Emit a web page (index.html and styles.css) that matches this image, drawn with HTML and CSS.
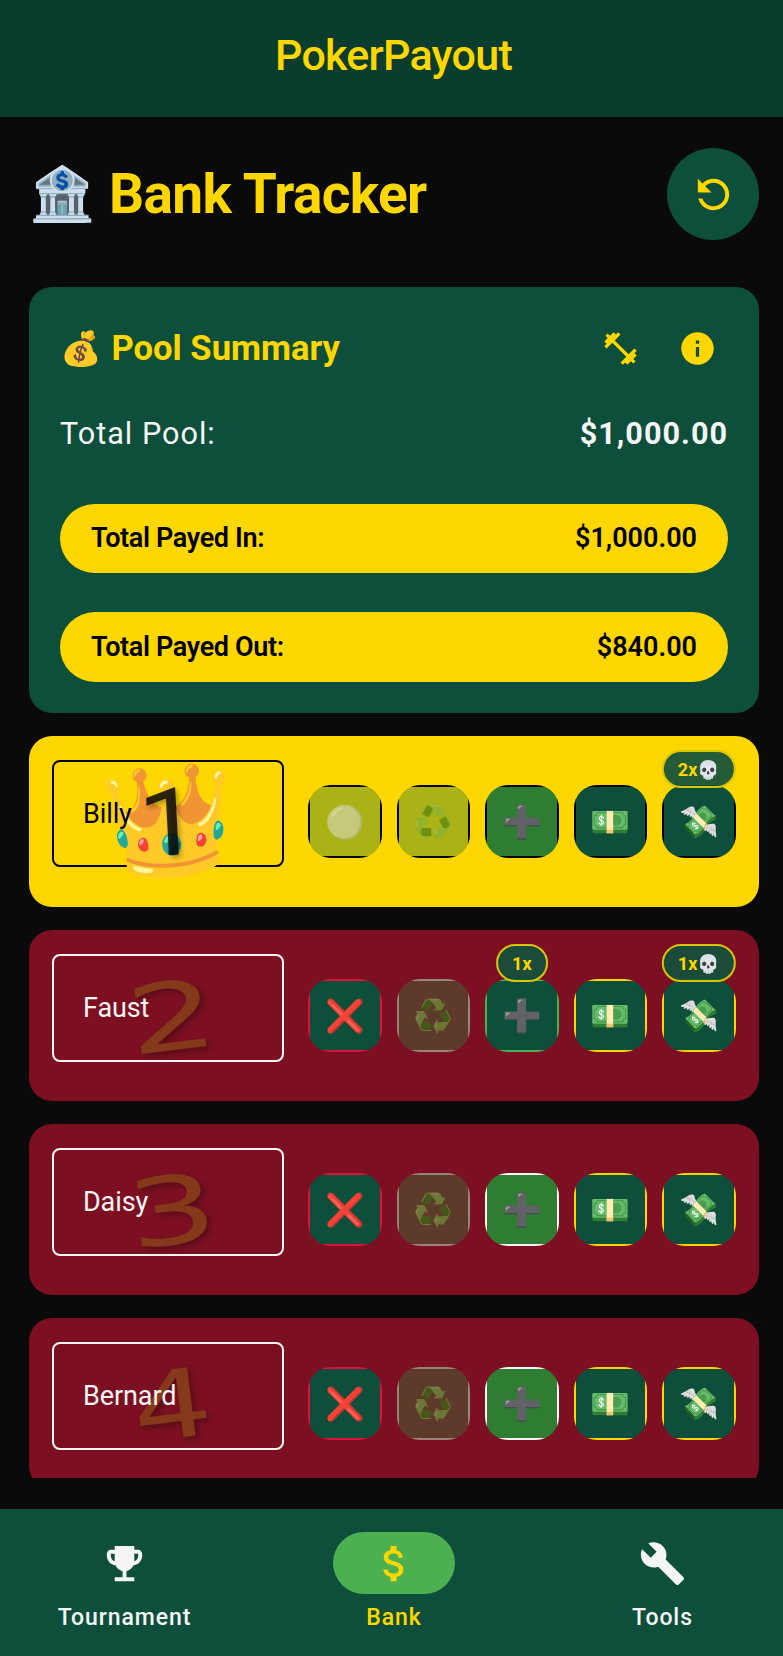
FILE: index.html
```html
<!DOCTYPE html>
<html lang="en">
<head>
<meta charset="utf-8">
<title>PokerPayout</title>
<link rel="stylesheet" href="styles.css">
</head>
<body>
<div class="app">
  <header class="topbar">PokerPayout</header>
  <main class="content">
    <div class="heading">
      <span class="emoji bank">🏦</span>
      <h1>Bank Tracker</h1>
      <button class="reset"><svg class="icon flip" viewBox="0 0 24 24"><path d="M17.65 6.35C16.2 4.9 14.21 4 12 4c-4.42 0-7.99 3.58-7.99 8s3.57 8 7.99 8c3.73 0 6.84-2.55 7.73-6h-2.08c-.82 2.33-3.04 4-5.65 4-3.31 0-6-2.69-6-6s2.69-6 6-6c1.66 0 3.14.69 4.22 1.78L13 11h7V4l-2.35 2.35z"/></svg></button>
    </div>
    <section class="summary">
      <div class="summary-head">
        <span class="emoji bag">💰</span>
        <h2>Pool Summary</h2>
        <svg class="icon small" viewBox="0 0 24 24"><path d="M20.57 14.86L22 13.43 20.57 12 17 15.57 8.43 7 12 3.43 10.57 2 9.14 3.43 7.71 2 5.57 4.14 4.14 2.71 2.71 4.14l1.43 1.43L2 7.71l1.43 1.43L2 10.57 3.43 12 7 8.43 15.57 17 12 20.57 13.43 22l1.43-1.43L16.29 22l2.14-2.14 1.43 1.43 1.43-1.43-1.43-1.43L22 16.29z"/></svg>
        <svg class="icon small" viewBox="0 0 24 24"><path d="M12 2C6.480 2 2 6.480 2 12s4.480 10 10 10 10-4.480 10-10S17.520 2 12 2zm1 15h-2v-6h2v6zm0-8h-2V7h2v2z"/></svg>
      </div>
      <div class="pool"><span>Total Pool:</span><b>$1,000.00</b></div>
      <div class="pill"><span class="caption">Total Payed In:</span><span>$1,000.00</span></div>
      <div class="pill"><span class="caption">Total Payed Out:</span><span>$840.00</span></div>
    </section>
    <section class="player winner">
      <div class="name"><span class="emoji crown">👑</span><span class="rank">1</span><span class="label">Billy</span></div>
      <div class="actions">
        <button class="act off"><span class="emoji">⚪</span></button>
        <button class="act off"><span class="emoji">♻️</span></button>
        <button class="act add"><span class="emoji">➕</span></button>
        <button class="act"><span class="emoji">💵</span></button>
        <div class="slot"><button class="act"><span class="emoji">💸</span></button><span class="badge">2x<span class="emoji">💀</span></span></div>
      </div>
    </section>
    <section class="player">
      <div class="name"><span class="rank">2</span><span class="label">Faust</span></div>
      <div class="actions">
        <button class="act out"><span class="emoji">❌</span></button>
        <button class="act off"><span class="emoji">♻️</span></button>
        <div class="slot"><button class="act used"><span class="emoji">➕</span></button><span class="badge">1x</span></div>
        <button class="act"><span class="emoji">💵</span></button>
        <div class="slot"><button class="act"><span class="emoji">💸</span></button><span class="badge">1x<span class="emoji">💀</span></span></div>
      </div>
    </section>
    <section class="player">
      <div class="name"><span class="rank">3</span><span class="label">Daisy</span></div>
      <div class="actions">
        <button class="act out"><span class="emoji">❌</span></button>
        <button class="act off"><span class="emoji">♻️</span></button>
        <button class="act add"><span class="emoji">➕</span></button>
        <button class="act"><span class="emoji">💵</span></button>
        <button class="act"><span class="emoji">💸</span></button>
      </div>
    </section>
    <section class="player">
      <div class="name"><span class="rank narrow">4</span><span class="label">Bernard</span></div>
      <div class="actions">
        <button class="act out"><span class="emoji">❌</span></button>
        <button class="act off"><span class="emoji">♻️</span></button>
        <button class="act add"><span class="emoji">➕</span></button>
        <button class="act"><span class="emoji">💵</span></button>
        <button class="act"><span class="emoji">💸</span></button>
      </div>
    </section>
  </main>
  <nav class="tabs">
    <a class="tab"><span class="tab-icon"><svg class="icon" viewBox="0 0 24 24"><path d="M19 5h-2V3H7v2H5c-1.1 0-2 .9-2 2v1c0 2.55 1.92 4.63 4.39 4.94.63 1.5 1.98 2.63 3.61 2.96V19H7v2h10v-2h-4v-3.1c1.63-.33 2.98-1.46 3.61-2.96C19.08 12.63 21 10.55 21 8V7c0-1.1-.9-2-2-2zM5 8V7h2v3.82C5.840 10.4 5 9.3 5 8zm14 0c0 1.3-.84 2.4-2 2.82V7h2v1z"/></svg></span>Tournament</a>
    <a class="tab active"><span class="tab-icon"><svg class="icon" viewBox="0 0 24 24"><path d="M11.8 10.9c-2.27-.59-3-1.2-3-2.15 0-1.09 1.01-1.85 2.7-1.85 1.78 0 2.44.85 2.5 2.1h2.21c-.07-1.72-1.12-3.3-3.21-3.81V3h-3v2.16c-1.94.42-3.5 1.68-3.5 3.61 0 2.31 1.91 3.46 4.7 4.13 2.5.6 3 1.48 3 2.41 0 .69-.49 1.79-2.7 1.79-2.06 0-2.87-.92-2.98-2.1h-2.2c.12 2.19 1.76 3.42 3.68 3.83V21h3v-2.15c1.95-.37 3.5-1.5 3.5-3.55 0-2.84-2.43-3.81-4.7-4.4z"/></svg></span>Bank</a>
    <a class="tab"><span class="tab-icon"><svg class="icon" viewBox="0 0 24 24"><path d="M22.7 19l-9.1-9.1c.9-2.3.4-5-1.5-6.9-2-2-5-2.4-7.4-1.3L9 6 6 9 1.6 4.7C.4 7.1.9 10.1 2.9 12.1c1.9 1.9 4.6 2.4 6.9 1.5l9.1 9.1c.4.4 1 .4 1.4 0l2.3-2.3c.5-.4.5-1.1.1-1.4z"/></svg></span>Tools</a>
  </nav>
</div>
</body>
</html>
```
FILE: styles.css
```css
* { box-sizing: border-box; margin: 0; }
body { background: #0a0a0a; font-family: Roboto, sans-serif; color: #f5f5f5; }
button { border: 0; padding: 0; }
.app { height: 1656px; display: flex; flex-direction: column; overflow: hidden; }
.icon { width: 47px; height: 47px; fill: currentColor; display: block; }
.small { width: 39px; height: 39px; }
.flip { transform: scaleX(-1); }
.emoji { font-family: "Noto Color Emoji", sans-serif; font-weight: 400; letter-spacing: 0; }

.topbar { height: 117px; flex: none; background: #0b3d2e; color: #ffd700; display: flex; justify-content: center; padding: 29px 0 0 4px; font-size: 43px; line-height: 52px; font-weight: 500; letter-spacing: -.75px; }
.content { height: 1361px; flex: none; padding: 31px 24px 0 29px; overflow: hidden; }
.heading { height: 92px; display: flex; align-items: center; color: #ffd700; margin-bottom: 46.5px; }
.bank { font-size: 53px; width: 80px; line-height: 60px; }
h1 { font-size: 55px; font-weight: 700; flex: 1; line-height: 64px; letter-spacing: -.65px; }
.reset { width: 92px; height: 92px; border-radius: 50%; background: #0e4f3c; color: #ffd700; display: flex; align-items: center; justify-content: center; }

.summary { height: 426.5px; border-radius: 23px; background: #0e4f3c; padding: 30.5px 31px; margin-bottom: 23px; }
.summary-head { height: 62px; display: flex; align-items: center; color: #ffd700; }
.bag { font-size: 33.5px; width: 51.5px; }
h2 { font-size: 34.600px; font-weight: 700; flex: 1; }
.summary-head .icon { margin-right: 38px; }
.summary-head .icon:last-child { margin-right: 11px; }
.pool { display: flex; justify-content: space-between; font-size: 30.600px; letter-spacing: 1px; line-height: 40px; margin: 35px 0 49.5px; }
.pill { height: 69.5px; border-radius: 35px; background: #ffd700; color: #000; display: flex; align-items: center; justify-content: space-between; padding: 0 31px; font-size: 27px; font-weight: 600; margin-bottom: 39px; }
.caption { letter-spacing: -.35px; }

.player { height: 171px; margin-bottom: 23px; border-radius: 23px; background: #7c1022; padding: 24px 23.5px 24px 23px; display: flex; justify-content: space-between; }
.winner { background: #ffd700; color: #000; }
.name { position: relative; width: 232px; height: 108px; border: 2px solid #f5f5f5; border-radius: 8px; display: flex; align-items: center; padding-left: 29px; font-size: 27px; letter-spacing: -.1px; }
.winner .name { height: 107px; border-color: #000; }
.label { position: relative; }
.rank { position: absolute; left: 73px; top: 16px; width: 90px; text-align: center; font: 88px/92px "DejaVu Sans", sans-serif; letter-spacing: 0; color: #84391a; text-shadow: 2px 3px 5px rgba(0, 0, 0, .3); transform: rotate(-7deg) scale(1.6, 1.07); }
.narrow { transform: rotate(-7deg) scale(1.42, 1.07); }
.winner .rank { font-family: Roboto, sans-serif; font-size: 94px; left: 70px; top: 15px; color: rgba(10, 10, 10, .85); transform: rotate(-3deg) scaleX(1.15); }
.crown { position: absolute; left: 53px; top: 3px; font-size: 100px; line-height: 112px; transform: rotate(-5deg) scale(1.07); }
.actions { display: flex; gap: 15.25px; padding-top: 25px; }
.slot { position: relative; height: 73px; }
.act { --fill: #0e4f3c; --edge: #ffd700; width: 73.25px; height: 73px; border-radius: 23px; display: flex; align-items: center; justify-content: center; font-size: 32px; line-height: 38px; background: linear-gradient(var(--fill), var(--fill)) center / calc(100% - 4px) calc(100% - 4px) no-repeat, var(--edge); }
.winner .act { --edge: #000; }
.player .out { --edge: #dc143c; }
.off { --fill: #5e3a2a; --edge: #9c8378; }
.off .emoji { opacity: .5; }
.winner .off { --fill: #aab215; }
.add { --fill: #2e7d32; --edge: #f5f5f5; }
.used { --edge: #4caf50; }
.badge { position: absolute; left: 50%; top: -35px; transform: translateX(-50%); height: 38px; border: 2px solid #d9c408; border-radius: 19px; background: rgba(18, 80, 60, .92); color: #ffd700; display: flex; align-items: center; padding: 0 14px; font-size: 18px; font-weight: 700; letter-spacing: .2px; white-space: nowrap; }
.badge .emoji { font-size: 18px; }

.tabs { margin-top: auto; height: 147px; background: #0e4f3c; display: grid; grid-template-columns: 249px 290px 247px; padding-top: 23px; }
.tab { display: flex; flex-direction: column; align-items: center; font-size: 23px; font-weight: 500; letter-spacing: .9px; gap: 10px; line-height: 28px; }
.tab-icon { width: 122px; height: 62px; border-radius: 31px; display: flex; align-items: center; justify-content: center; }
.active { color: #ffd700; }
.active .tab-icon { background: #4caf50; }
```
